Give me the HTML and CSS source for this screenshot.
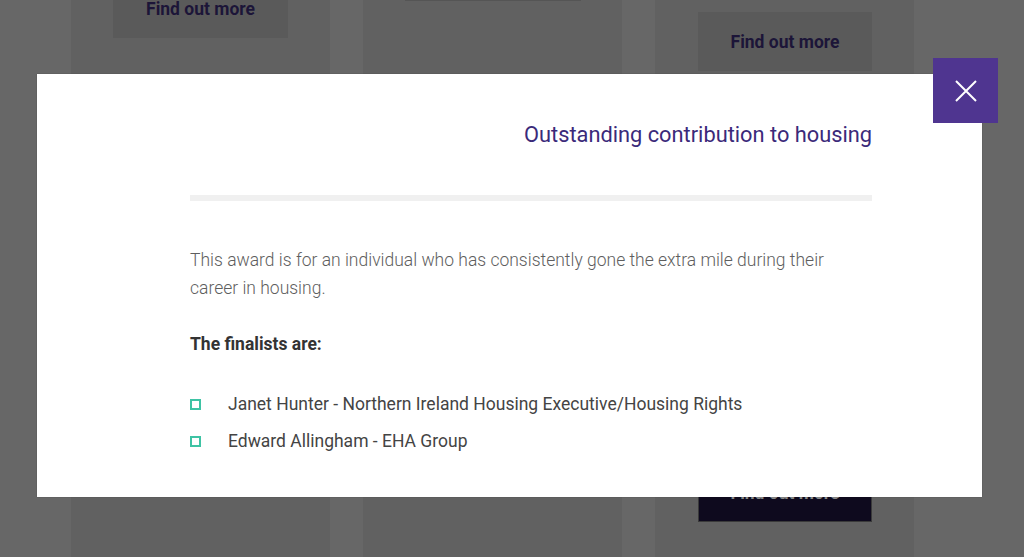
FILE: index.html
```html
<!DOCTYPE html>
<html lang="en">
<head>
<meta charset="utf-8">
<title>Outstanding contribution to housing</title>
<link rel="stylesheet" href="styles.css">
</head>
<body>
<div class="page">
  <div class="card">
    <a class="btn btn-top1">Find out more</a>
  </div>
  <div class="card">
    <div class="card-bar"></div>
  </div>
  <div class="card">
    <a class="btn btn-top3">Find out more</a>
    <a class="btn btn-dark">Find out more</a>
  </div>
</div>

<div class="overlay">
  <div class="modal">
    <button class="close" aria-label="Close">
      <svg width="22" height="22" viewBox="0 0 22 22"><path d="M1 1 L21 21 M21 1 L1 21" stroke="#fff" stroke-width="2" fill="none"/></svg>
    </button>
    <div class="modal-inner">
      <h2 class="title">Outstanding contribution to housing</h2>
      <hr class="rule">
      <p class="desc">This award is for an individual who has consistently gone the extra mile during their career in housing.</p>
      <p class="finalists">The finalists are:</p>
      <ul class="list">
        <li>Janet Hunter - Northern Ireland Housing Executive/Housing Rights</li>
        <li>Edward Allingham - EHA Group</li>
      </ul>
    </div>
  </div>
</div>
</body>
</html>
```
FILE: styles.css
```css
* { box-sizing: border-box; }
html, body { margin: 0; padding: 0; }
body {
  width: 1024px;
  height: 557px;
  overflow: hidden;
  background: #676767;
  font-family: Roboto, "Liberation Sans", sans-serif;
  position: relative;
}
.page {
  display: flex;
  gap: 33px;
  padding-left: 71px;
  height: 557px;
}
.card {
  width: 259px;
  height: 557px;
  background: #616161;
  display: flex;
  flex-direction: column;
  align-items: flex-start;
}
.btn {
  display: flex;
  align-items: center;
  justify-content: center;
  width: 175px;
  height: 59px;
  margin-left: 42px;
  background: #5a5a5a;
  color: #1c1538;
  font-weight: 700;
  font-size: 17.5px;
}
.btn-top1 { margin-top: -21px; }
.btn-top3 { margin-top: 12px; margin-left: 43px; width: 174px; }
.btn-dark {
  margin-top: 392px;
  margin-left: 43px;
  width: 174px;
  background: #0e0a1e;
  color: #8a8a8a;
  border: 1px solid #3a3a3a;
}
.card-bar {
  margin-left: 42px;
  width: 176px;
  height: 1px;
  background: #555;
}
.overlay {
  position: absolute;
  inset: 0;
}
.modal {
  position: absolute;
  left: 37px;
  top: 74px;
  width: 945px;
  height: 423px;
  background: #fff;
  box-shadow: 0 0 1px rgba(0,0,0,0.3);
}
.close {
  position: absolute;
  right: -16px;
  top: -16px;
  width: 65px;
  height: 65px;
  border: 0;
  padding: 0;
  background: #4f3590;
  display: flex;
  align-items: center;
  justify-content: center;
}
.modal-inner {
  padding: 47px 110px 0 153px;
}
.title {
  margin: 0;
  text-align: right;
  font-weight: 400;
  font-size: 21.8px;
  line-height: 28px;
  color: #3b2a7a;
}
.rule {
  margin: 46px 0 0;
  border: 0;
  height: 6px;
  background: #f0f0f0;
}
.desc {
  margin: 45px 0 0;
  font-weight: 300;
  font-size: 17.5px;
  line-height: 28px;
  color: #5e5e5e;
}
.finalists {
  margin: 28px 0 0;
  font-weight: 700;
  font-size: 17.5px;
  line-height: 28px;
  color: #333;
}
.list {
  list-style: none;
  margin: 32px 0 0;
  padding: 0;
}
.list li {
  position: relative;
  padding-left: 38px;
  font-size: 17.5px;
  line-height: 28px;
  color: #444;
  margin-bottom: 9px;
}
.list li::before {
  content: "";
  position: absolute;
  left: 0;
  top: 9px;
  width: 7px;
  height: 7px;
  border: 2px solid #3ec3a4;
}
```
